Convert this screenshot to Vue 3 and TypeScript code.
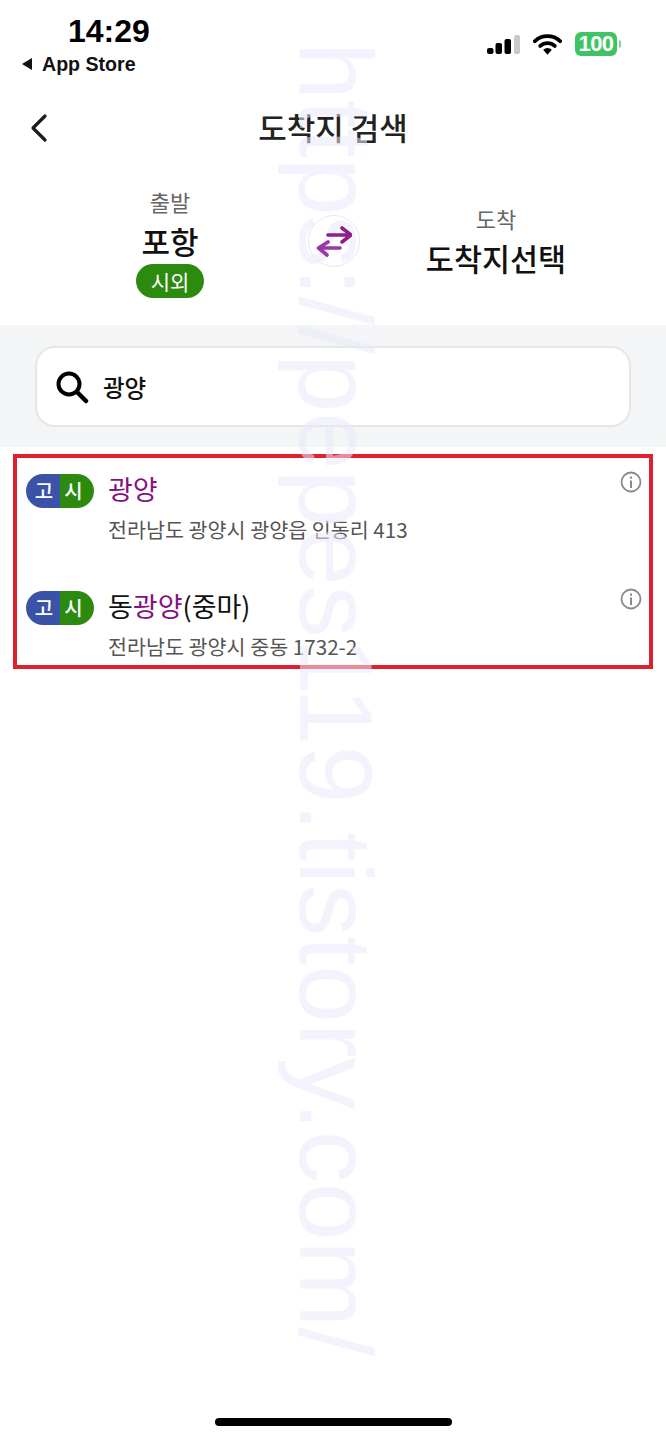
<template>
  <div class="screen">
    <!-- Status bar -->
    <div class="status-bar">
      <div class="status-left">
        <div class="clock">14:29</div>
        <div class="back-app"><span class="back-tri"></span>App Store</div>
      </div>
      <div class="status-right">
        <svg class="signal" width="33" height="19" viewBox="0 0 33 19">
          <rect x="0" y="13" width="6.5" height="6" rx="2" fill="#000" />
          <rect x="8.5" y="8" width="6.5" height="11" rx="2" fill="#000" />
          <rect x="17.5" y="4" width="6.5" height="15" rx="2" fill="#000" />
          <rect x="27" y="0" width="6" height="19" rx="2" fill="#c9c9c9" />
        </svg>
        <svg class="wifi" width="29" height="22" viewBox="0 0 30 22">
          <path d="M2 8 A19 19 0 0 1 28 8" fill="none" stroke="#000" stroke-width="4" stroke-linecap="round" />
          <path d="M7.5 13 A11 11 0 0 1 22.5 13" fill="none" stroke="#000" stroke-width="4" stroke-linecap="round" />
          <path d="M15 22 L10.5 17 A6.5 6.5 0 0 1 19.5 17 Z" fill="#000" />
        </svg>
        <div class="battery"><span>100</span></div>
        <span class="battery-cap"></span>
      </div>
    </div>

    <!-- Header -->
    <header class="header">
      <svg class="back" width="20" height="30" viewBox="0 0 20 30">
        <path d="M16 3 L4 15 L16 27" fill="none" stroke="#1c1c1c" stroke-width="3.2" stroke-linecap="round" stroke-linejoin="round" />
      </svg>
      <h1>도착지 검색</h1>
    </header>

    <!-- Route -->
    <section class="route">
      <div class="route-side from">
        <div class="route-label">출발</div>
        <div class="route-name">포항</div>
        <div class="route-tag">시외</div>
      </div>
      <button class="swap">
        <svg width="36" height="32" viewBox="0 0 36 32">
          <path d="M12 10 H34 M26 3 L35 10 L26 17" fill="none" stroke="#8c1f8c" stroke-width="3.6" stroke-linecap="round" stroke-linejoin="round" />
          <path d="M24 23 H4 M12 17 L2.5 23 L11 30" fill="none" stroke="#9c38a2" stroke-width="3.6" stroke-linecap="round" stroke-linejoin="round" />
        </svg>
      </button>
      <div class="route-side to">
        <div class="route-label">도착</div>
        <div class="route-name">도착지선택</div>
      </div>
    </section>

    <!-- Search -->
    <section class="search-band">
      <div class="search-box">
        <svg width="34" height="34" viewBox="0 0 34 34">
          <circle cx="14" cy="14" r="10.5" fill="none" stroke="#000" stroke-width="4" />
          <path d="M22 22 L31 31" stroke="#000" stroke-width="4.5" stroke-linecap="round" />
        </svg>
        <span class="query">광양</span>
      </div>
    </section>

    <!-- Results -->
    <section class="results">
      <div v-for="item in results" :key="item.address" class="result">
        <div class="badge"><span class="go">고</span><span class="si">시</span></div>
        <div class="result-body">
          <div class="result-name">
            <template v-for="part in item.name" :key="part.text"><span :class="{ hit: part.hit }">{{ part.text }}</span></template>
          </div>
          <div class="result-addr">{{ item.address }}</div>
        </div>
        <svg class="info" width="22" height="22" viewBox="0 0 22 22">
          <circle cx="11" cy="11" r="9.5" fill="none" stroke="#8a8a8a" stroke-width="1.8" />
          <rect x="10" y="9.5" width="2" height="7.5" fill="#8a8a8a" />
          <rect x="10" y="5.5" width="2" height="2.2" fill="#8a8a8a" />
        </svg>
      </div>
    </section>

    <div class="home-bar"></div>

    <!-- Watermark laid over the whole page -->
    <div class="watermark">https://pepes119.tistory.com/</div>
  </div>
</template>

<script setup lang="ts">
interface NamePart {
  text: string
  hit?: boolean
}

interface Result {
  name: NamePart[]
  address: string
}

const results: Result[] = [
  {
    name: [{ text: '광양', hit: true }],
    address: '전라남도 광양시 광양읍 인동리 413'
  },
  {
    name: [{ text: '동' }, { text: '광양', hit: true }, { text: '(중마)' }],
    address: '전라남도 광양시 중동 1732-2'
  }
]
</script>

<style>
body {
  background: #fff;
}
</style>

<style scoped>
.screen {
  position: relative;
  width: 666px;
  height: 1440px;
  overflow: hidden;
  background: #fff;
  font-family: 'Noto Sans CJK KR', 'Liberation Sans', sans-serif;
  color: #111;
}

.status-bar {
  height: 94px;
  display: flex;
  justify-content: space-between;
  box-sizing: border-box;
  padding: 14px 45px 0 22px;
}

.clock {
  font-family: 'Liberation Sans', sans-serif;
  font-weight: 700;
  font-size: 32px;
  line-height: 34px;
  margin-left: 46px;
  color: #000;
}

.back-app {
  display: flex;
  align-items: center;
  font-family: 'Liberation Sans', sans-serif;
  font-weight: 700;
  font-size: 19.6px;
  line-height: 24px;
  margin-top: 4px;
  color: #111;
}

.back-tri {
  width: 0;
  height: 0;
  border-style: solid;
  border-width: 6px 10px 6px 0;
  border-color: transparent #111 transparent transparent;
  margin-right: 10px;
}

.status-right {
  display: flex;
  align-items: center;
  height: 34px;
  margin-top: 13px;
}

.signal {
  margin-right: 13px;
}

.wifi {
  margin-right: 13px;
}

.battery {
  width: 42px;
  height: 24px;
  border-radius: 6px;
  background: #3fc464;
  display: flex;
  align-items: center;
  justify-content: center;
  font-family: 'Liberation Sans', sans-serif;
  font-weight: 700;
  font-size: 22px;
  letter-spacing: -0.5px;
  color: #fff;
}

.battery-cap {
  width: 2px;
  height: 8px;
  margin-left: 2px;
  border-radius: 0 2px 2px 0;
  background: #7ed79a;
}

.header {
  position: relative;
  height: 70px;
  display: flex;
  align-items: center;
  justify-content: center;
}

.back {
  position: absolute;
  left: 29px;
  top: 19px;
}

.header h1 {
  margin: -4px 0 0;
  font-weight: 500;
  font-size: 31px;
  line-height: 70px;
  color: #222;
}

.route {
  height: 161px;
  box-sizing: border-box;
  padding-bottom: 7px;
  display: flex;
  align-items: center;
}

.route-side {
  display: flex;
  flex-direction: column;
  align-items: center;
}

.from {
  width: 340px;
  margin-top: 2px;
}

.from .route-name {
  margin: 3px 0 1px;
}

.to {
  width: 272px;
  gap: 3px;
}

.route-label {
  font-size: 22px;
  line-height: 30px;
  color: #666;
}

.route-name {
  font-weight: 500;
  font-size: 31px;
  line-height: 44px;
  color: #111;
}

.to .route-name {
  font-size: 30.5px;
}

.route-tag {
  width: 68px;
  height: 34px;
  border-radius: 17px;
  background: #2c8a0e;
  color: #fff;
  font-size: 21px;
  line-height: 34px;
  text-align: center;
}

.swap {
  flex: none;
  width: 52px;
  height: 52px;
  margin-left: -32px;
  padding: 0;
  border: 1px solid #e8e8e8;
  border-radius: 50%;
  background: #fff;
  display: flex;
  align-items: center;
  justify-content: center;
}

/* arrows stay solid, the watermark falls in a letter gap on the original */
.swap svg {
  position: relative;
  z-index: 1;
}

.search-band {
  height: 122px;
  box-sizing: border-box;
  padding: 21px 35px 20px;
  background: #f4f5f6;
}

.search-box {
  height: 81px;
  box-sizing: border-box;
  display: flex;
  align-items: center;
  gap: 14px;
  padding-left: 18px;
  border: 2px solid #e6e6e6;
  border-radius: 20px;
  background: #fff;
}

.query {
  font-size: 23.5px;
  font-weight: 500;
  color: #111;
}

.results {
  margin: 7px 13px 0 13px;
  height: 215px;
  box-sizing: border-box;
  border: 4px solid #e0202c;
  padding: 13px 8px 0 9px;
}

.result {
  display: flex;
  height: 116.5px;
}

.badge {
  width: 68px;
  height: 34px;
  border-radius: 17px;
  overflow: hidden;
  display: flex;
  margin-top: 3px;
  color: #fff;
  font-size: 20px;
  font-weight: 500;
  line-height: 34px;
}

.go {
  flex: 0 0 34px;
  padding-left: 2px;
  box-sizing: border-box;
  text-align: center;
  background: #3a53a8;
}

.si {
  flex: 1;
  padding-right: 7px;
  text-align: center;
  background: #2c8a0e;
}

.result-body {
  flex: 1;
  margin-left: 14px;
  margin-top: -2px;
}

.result-name {
  font-size: 27px;
  line-height: 40px;
  color: #111;
}

.hit {
  color: #86107f;
}

.result-addr {
  margin-top: 5px;
  font-size: 20.65px;
  line-height: 30px;
  color: #555;
}

.info {
  margin-right: -1px;
}

.home-bar {
  position: absolute;
  left: 215px;
  bottom: 14px;
  width: 237px;
  height: 8px;
  border-radius: 4px;
  background: #000;
}

.watermark {
  position: absolute;
  left: 281px;
  top: 42px;
  width: 110px;
  writing-mode: vertical-rl;
  white-space: nowrap;
  font-family: 'Liberation Sans', sans-serif;
  font-size: 104px;
  line-height: 110px;
  color: rgba(232, 234, 250, 0.55);
  pointer-events: none;
}
</style>
